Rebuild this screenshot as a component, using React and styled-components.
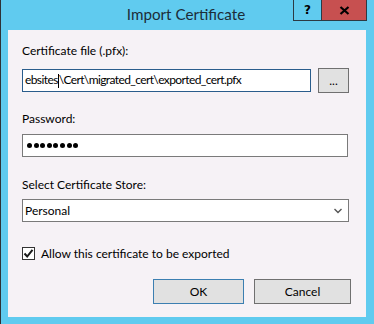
import React from "react";
import styled, { createGlobalStyle } from "styled-components";

const GlobalStyle = createGlobalStyle`
  html, body { margin: 0; padding: 0; background: #ffffff; }
  body { font-family: Lato, "Noto Sans", sans-serif; }
  * { box-sizing: border-box; }
`;

const Window = styled.div`
  width: 374px;
  height: 324px;
  background: #60cbef;
  border-left: 1px solid #2e3236;
  display: flex;
  flex-direction: column;
`;

const TitleBar = styled.div`
  height: 30px;
  display: grid;
  grid-template-columns: 1fr auto 1fr;
`;

const Title = styled.div`
  grid-column: 2;
  font-size: 15.2px;
  line-height: 20px;
  padding-top: 4px;
  padding-right: 3px;
  color: #1c2c38;
  white-space: nowrap;
`;

const Controls = styled.div`
  grid-column: 3;
  justify-self: end;
  align-self: start;
  display: flex;
  margin-right: 7px;
`;

const CaptionButton = styled.div`
  height: 21px;
  width: ${(p) => p.$w}px;
  background: ${(p) => p.$bg};
  border: 1px solid #2c3a44;
  border-top: 0;
  border-right: ${(p) => (p.$last ? "1px solid #2c3a44" : "0")};
  display: flex;
  align-items: center;
  justify-content: center;
  font-family: "DejaVu Sans", sans-serif;
  font-weight: bold;
  font-size: 12px;
  color: #000;
`;

const Client = styled.div`
  margin: 0 8px 0 7px;
  height: 287px;
  background: #f6f2f6;
  padding: 13px 17px 0 14px;
  display: flex;
  flex-direction: column;
  color: #000;
  font-size: 12px;
`;

const Label = styled.div`
  line-height: 16px;
  height: 16px;
  margin-top: ${(p) => p.$mt || 0}px;
  margin-bottom: ${(p) => p.$mb || 0}px;
  white-space: nowrap;
`;

const FileRow = styled.div`
  display: flex;
  align-items: center;
  gap: 7px;
  height: 25px;
`;

const Field = styled.div`
  flex: ${(p) => (p.$grow ? 1 : "none")};
  height: 23px;
  background: #ffffff;
  border: 1px solid ${(p) => (p.$focus ? "#2a5d8c" : "#7a7a7a")};
  margin-right: ${(p) => p.$mr || 0}px;
  display: flex;
  align-items: center;
  padding-left: 2px;
  line-height: 16px;
  white-space: nowrap;
  overflow: hidden;
`;

const PathText = styled.span`
  letter-spacing: -0.6px;
`;

const Caret = styled.span`
  display: inline-block;
  width: 1px;
  height: 14px;
  background: #000;
  vertical-align: middle;
  margin: 0 0 1px 0;
`;

const Dots = styled.div`
  display: flex;
  gap: 1.6px;
  padding-left: 2px;
`;

const Dot = styled.span`
  width: 5px;
  height: 5px;
  border-radius: 50%;
  background: #000;
`;

const SelectBox = styled(Field)`
  justify-content: space-between;
  padding-right: 6px;
`;

const Button = styled.div`
  width: ${(p) => p.$w}px;
  height: 25px;
  background: #e1e1e1;
  border: 1px solid ${(p) => (p.$default ? "#3c7fb1" : "#707070")};
  display: flex;
  align-items: center;
  justify-content: center;
  line-height: 16px;
`;

const CheckRow = styled.div`
  display: flex;
  align-items: center;
  gap: 6px;
  height: 16px;
  margin-top: 23px;
`;

const Box = styled.div`
  width: 13px;
  height: 13px;
  border: 1px solid #333;
  background: #fff;
  display: flex;
  align-items: center;
  justify-content: center;
`;

const ButtonRow = styled.div`
  display: flex;
  justify-content: flex-end;
  gap: 10px;
  margin-top: 18px;
  margin-right: -2px;
`;

export default function App() {
  const dots = Array.from({ length: 8 });
  return (
    <>
      <GlobalStyle />
      <Window>
        <TitleBar>
          <Title>Import Certificate</Title>
          <Controls>
            <CaptionButton $w={28} $bg="#60cbef">?</CaptionButton>
            <CaptionButton $w={46} $bg="#c75050" $last>
              <svg width="11" height="9" viewBox="0 0 11 9">
                <path d="M1.5 1 L9.5 8 M9.5 1 L1.5 8" stroke="#000" strokeWidth="2.2" />
              </svg>
            </CaptionButton>
          </Controls>
        </TitleBar>
        <Client>
          <Label $mb={9}>Certificate file (.pfx):</Label>
          <FileRow>
            <Field $grow $focus>
              <PathText>
                ebsites<Caret />\Cert\migrated_cert\exported_cert.pfx
              </PathText>
            </Field>
            <Button $w={31}>...</Button>
          </FileRow>
          <Label $mt={18} $mb={7}>Password:</Label>
          <Field $mr={1}>
            <Dots>
              {dots.map((_, i) => (
                <Dot key={i} />
              ))}
            </Dots>
          </Field>
          <Label $mt={20} $mb={6}>Select Certificate Store:</Label>
          <SelectBox>
            <span>Personal</span>
            <svg width="8" height="6" viewBox="0 0 8 6">
              <path d="M0.5 1 L4 4.5 L7.5 1" fill="none" stroke="#555" strokeWidth="1.4" />
            </svg>
          </SelectBox>
          <CheckRow>
            <Box>
              <svg width="11" height="11" viewBox="0 0 11 11">
                <path d="M1.5 5.5 L4.2 8.5 L9.5 1.8" fill="none" stroke="#1a1a1a" strokeWidth="2" />
              </svg>
            </Box>
            <span>Allow this certificate to be exported</span>
          </CheckRow>
          <ButtonRow>
            <Button $w={91} $default>OK</Button>
            <Button $w={97}>Cancel</Button>
          </ButtonRow>
        </Client>
      </Window>
    </>
  );
}
